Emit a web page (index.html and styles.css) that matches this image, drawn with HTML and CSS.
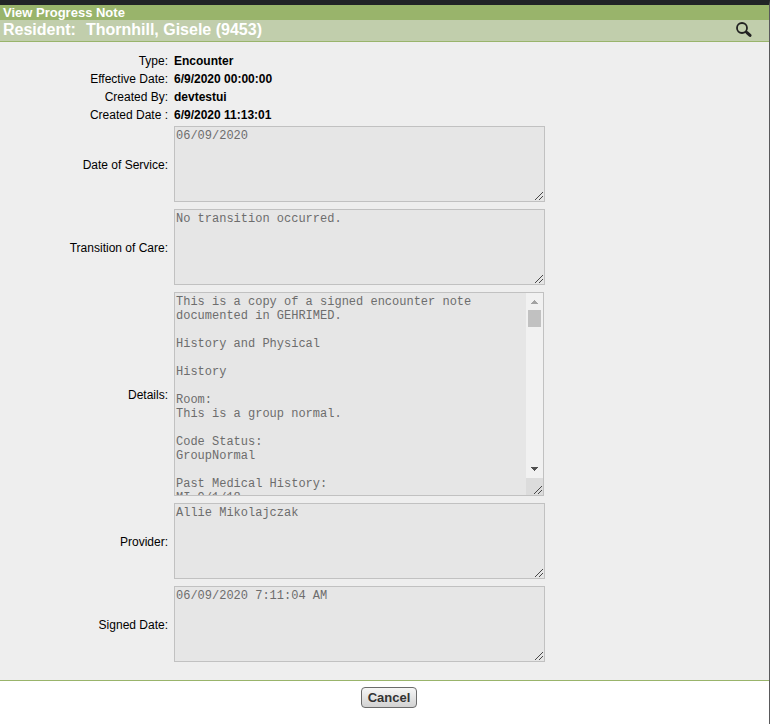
FILE: index.html
```html
<!DOCTYPE html>
<html lang="en">
<head>
<meta charset="utf-8">
<title>View Progress Note</title>
<link rel="stylesheet" href="styles.css">
</head>
<body>
<header>
  <h1 class="title">View Progress Note</h1>
  <div class="resident">
    <span>Resident:</span>
    <span class="resident-name">Thornhill, Gisele (9453)</span>
    <button class="search" type="button" aria-label="Search">
      <svg width="16" height="16" viewBox="0 0 16 16" fill="none" stroke="#222">
        <circle cx="6" cy="6" r="5" stroke-width="1.8"/>
        <path d="M9.5 9.5L11 11" stroke-width="2"/>
        <path d="M11 10.6L14 13.4" stroke-width="3" stroke-linecap="round"/>
      </svg>
    </button>
  </div>
</header>
<form class="note">
  <dl class="facts">
    <dt>Type:</dt><dd>Encounter</dd>
    <dt>Effective Date:</dt><dd>6/9/2020 00:00:00</dd>
    <dt>Created By:</dt><dd>devtestui</dd>
    <dt>Created Date :</dt><dd>6/9/2020 11:13:01</dd>
  </dl>
  <div class="field">
    <label for="service">Date of Service:</label>
    <div class="box"><textarea id="service" disabled>06/09/2020</textarea><svg class="grip" width="9" height="9" viewBox="0 0 9 9"><use href="#grip-lines"/></svg></div>
  </div>
  <div class="field">
    <label for="transition">Transition of Care:</label>
    <div class="box"><textarea id="transition" disabled>No transition occurred.</textarea><svg class="grip" width="9" height="9" viewBox="0 0 9 9"><use href="#grip-lines"/></svg></div>
  </div>
  <div class="field">
    <label for="details">Details:</label>
    <div class="box box-tall"><textarea id="details" disabled>This is a copy of a signed encounter note
documented in GEHRIMED.

History and Physical

History

Room:
This is a group normal.

Code Status:
GroupNormal

Past Medical History:
MI 9/1/18</textarea>
      <div class="scrollbar" aria-hidden="true">
        <svg class="arrow" width="17" height="17" viewBox="0 0 17 17" shape-rendering="crispEdges"><path d="M8 7h1v1h1v1h1v1h1v1H5v-1h1V9h1V8h1z" fill="#a3a3a3"/></svg>
        <div class="thumb"></div>
        <svg class="arrow arrow-down" width="17" height="17" viewBox="0 0 17 17" shape-rendering="crispEdges"><path d="M5 6h7v1h-1v1h-1v1H9v1H8V9H7V8H6V7H5z" fill="#505050"/></svg>
        <div class="corner"></div>
      </div>
      <svg class="grip" width="9" height="9" viewBox="0 0 9 9"><use href="#grip-lines"/></svg></div>
  </div>
  <div class="field">
    <label for="provider">Provider:</label>
    <div class="box"><textarea id="provider" disabled>Allie Mikolajczak</textarea><svg class="grip" width="9" height="9" viewBox="0 0 9 9"><use href="#grip-lines"/></svg></div>
  </div>
  <div class="field">
    <label for="signed">Signed Date:</label>
    <div class="box"><textarea id="signed" disabled>06/09/2020 7:11:04 AM</textarea><svg class="grip" width="9" height="9" viewBox="0 0 9 9"><use href="#grip-lines"/></svg></div>
  </div>
</form>
<footer><button class="cancel" type="button">Cancel</button></footer>
<svg class="defs" width="0" height="0" aria-hidden="true">
  <defs>
    <g id="grip-lines" fill="#484848" shape-rendering="crispEdges">
      <path d="M0 8h1v1H0zM1 7h1v1H1zM2 6h1v1H2zM3 5h1v1H3zM4 4h1v1H4zM5 3h1v1H5zM6 2h1v1H6zM7 1h1v1H7zM4 8h1v1H4zM5 7h1v1H5zM6 6h1v1H6zM7 5h1v1H7z"/>
    </g>
  </defs>
</svg>
</body>
</html>
```

FILE: styles.css
```css
* {
  box-sizing: border-box;
}

body {
  margin: 0;
  min-height: 100vh;
  border-top: 5px solid #212326;
  border-right: 1px solid #59595b;
  background: #fff;
  color: #000;
  font: 12px/18px "Liberation Sans", Arial, sans-serif;
}

header {
  border-bottom: 1px solid #99b46b;
  color: #fff;
  font-weight: bold;
}

.title {
  margin: 0;
  padding-left: 3px;
  background: #99b46b;
  font-size: 13px;
  line-height: 15px;
}

.resident {
  display: flex;
  align-items: center;
  height: 21px;
  padding: 0 17px 2px 3px;
  background: #c1ceac;
  font-size: 16px;
}

.resident-name {
  margin-left: 10px;
}

.search {
  display: flex;
  margin-left: auto;
  padding: 0;
  border: 0;
  background: none;
}

.note {
  padding: 10px 0 18px;
  border-bottom: 1px solid #99b46b;
  background: #eee;
}

.facts,
.field {
  display: grid;
  grid-template-columns: 168px minmax(0, 371px);
  column-gap: 6px;
}

.facts {
  margin: 0 0 2px;
}

.facts dt,
.field label {
  text-align: right;
}

.field label {
  padding-top: 2px;
}

.facts dd {
  margin: 0;
  font-weight: bold;
}

.field {
  align-items: center;
}

.field + .field {
  margin-top: 7px;
}

.box {
  position: relative;
  height: 76px;
}

.box-tall {
  height: 204px;
  margin-right: 1px;
}

textarea {
  display: block;
  width: 100%;
  height: 100%;
  margin: 0;
  padding: 2px 1px;
  border: 1px solid #c1c1c1;
  border-radius: 0;
  background: #e6e6e6;
  color: #6d6d6d;
  font: 12px/14px "Liberation Mono", "Courier New", monospace;
  overflow: hidden;
  resize: none;
}

.grip {
  position: absolute;
  right: 1px;
  bottom: 2px;
}

.scrollbar {
  position: absolute;
  top: 1px;
  right: 1px;
  bottom: 1px;
  display: flex;
  flex-direction: column;
  width: 17px;
  background: #f1f1f1;
}

.arrow {
  display: block;
}

.arrow-down {
  margin-top: auto;
}

.thumb {
  height: 17px;
  margin: 0 2px;
  background: #c1c1c1;
}

.corner {
  height: 17px;
  background: #dcdcdc;
}

footer {
  display: flex;
  justify-content: center;
  padding: 6px 0;
}

.cancel {
  height: 21px;
  margin-left: 9px;
  padding: 0 6px;
  border: 1px solid #6b6b6b;
  border-radius: 4px;
  background: linear-gradient(#f6f6f6, #d2d2d2);
  color: #333;
  font: bold 13px/19px "Liberation Sans", Arial, sans-serif;
}

.defs {
  position: absolute;
}
```
